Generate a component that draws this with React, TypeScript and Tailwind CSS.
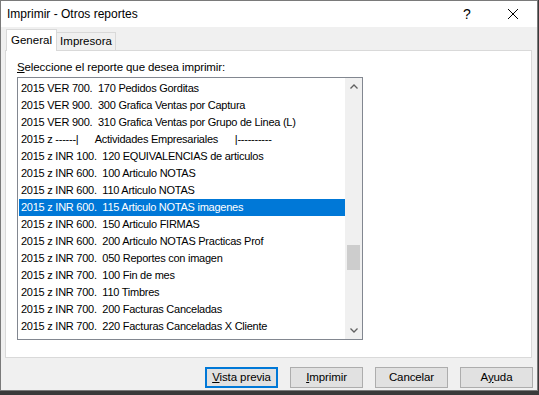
import React, { useState } from 'react';

const reports = [
  '2015 VER 700.  170 Pedidos Gorditas',
  '2015 VER 900.  300 Grafica Ventas por Captura',
  '2015 VER 900.  310 Grafica Ventas por Grupo de Linea (L)',
  '2015 z ------|      Actividades Empresariales      |----------',
  '2015 z INR 100.  120 EQUIVALENCIAS de articulos',
  '2015 z INR 600.  100 Articulo NOTAS',
  '2015 z INR 600.  110 Articulo NOTAS',
  '2015 z INR 600.  115 Articulo NOTAS imagenes',
  '2015 z INR 600.  150 Articulo FIRMAS',
  '2015 z INR 600.  200 Articulo NOTAS Practicas Prof',
  '2015 z INR 700.  050 Reportes con imagen',
  '2015 z INR 700.  100 Fin de mes',
  '2015 z INR 700.  110 Timbres',
  '2015 z INR 700.  200 Facturas Canceladas',
  '2015 z INR 700.  220 Facturas Canceladas X Cliente',
];

const font = { fontFamily: '"Liberation Sans", Arial, sans-serif' };

const Button: React.FC<{ children: React.ReactNode; focused?: boolean }> = ({ children, focused }) => (
  <button
    className={`w-[73px] h-[21px] text-[11.5px] tracking-[-0.1px] text-black bg-[#e1e1e1] border ${focused ? 'border-[#0078d7] shadow-[inset_0_0_0_1px_#0078d7]' : 'border-[#adadad]'} flex items-center justify-center`}
  >
    {children}
  </button>
);

export default function App() {
  const [selected, setSelected] = useState(7);
  return (
    <div className="w-[539px] h-[395px] bg-[#3a3a3a] overflow-hidden" style={font}>
      <div className="w-[538px] h-[391px] bg-[#f0f0f0] border border-[#7a7a7a] flex flex-col">
        {/* title bar */}
        <div className="h-[26px] bg-white flex items-center shrink-0">
          <span className="pl-[6px] text-[12px] text-black flex-1">Imprimir - Otros reportes</span>
          <span className="w-[46px] text-center text-[14px] text-black">?</span>
          <span className="w-[46px] flex justify-center mr-[1px]">
            <svg width="10" height="10" viewBox="0 0 10 10">
              <path d="M0 0L10 10M10 0L0 10" stroke="#000" strokeWidth="1" />
            </svg>
          </span>
        </div>

        {/* tabs */}
        <div className="flex items-end pl-[5px] h-[23px] shrink-0">
          <div className="h-[22px] w-[51px] bg-white border border-b-0 border-[#d9d9d9] text-[11.5px] flex items-center justify-center relative top-[1px] z-10">
            General
          </div>
          <div className="h-[18px] w-[59px] bg-[#f0f0f0] border border-l-0 border-b-0 border-[#d9d9d9] text-[11.5px] flex items-center justify-center">
            Impresora
          </div>
        </div>

        {/* panel */}
        <div className="mx-[4px] w-[527px] h-[308px] bg-white border border-[#d9d9d9] pt-[9px] px-[11px] shrink-0">
          <div className="text-[11.5px] tracking-[-0.1px] text-black leading-[15px] mb-[2px]">
            <span className="underline">S</span>eleccione el reporte que desea imprimir:
          </div>
          <div className="w-[346px] h-[263px] border border-[#828790] flex">
            <div className="flex-1 pt-[2px] pl-[1px] overflow-hidden">
              {reports.map((r, i) => (
                <div
                  key={i}
                  onClick={() => setSelected(i)}
                  className={`h-[17px] leading-[17px] pl-[2px] text-[11px] tracking-[-0.25px] whitespace-pre ${i === selected ? 'bg-[#0078d7] text-white' : 'text-black'}`}
                >
                  {r}
                </div>
              ))}
            </div>
            <div className="w-[17px] bg-[#f0f0f0] flex flex-col items-center">
              <div className="h-[17px] w-full flex items-center justify-center">
                <svg width="8" height="5" viewBox="0 0 8 5">
                  <path d="M0.5 4.5L4 1L7.5 4.5" stroke="#606060" strokeWidth="1.3" fill="none" />
                </svg>
              </div>
              <div className="h-[150px]" />
              <div className="w-[13px] h-[25px] bg-[#cdcdcd]" />
              <div className="flex-1" />
              <div className="h-[17px] w-full flex items-center justify-center">
                <svg width="8" height="5" viewBox="0 0 8 5">
                  <path d="M0.5 0.5L4 4L7.5 0.5" stroke="#606060" strokeWidth="1.3" fill="none" />
                </svg>
              </div>
            </div>
          </div>
        </div>

        {/* buttons */}
        <div className="flex justify-end gap-[12px] pr-[4px] pt-[9px]">
          <Button focused>
            <span><span className="underline">V</span>ista previa</span>
          </Button>
          <Button>
            <span><span className="underline">I</span>mprimir</span>
          </Button>
          <Button>Cancelar</Button>
          <Button>
            <span>A<span className="underline">y</span>uda</span>
          </Button>
        </div>
      </div>
    </div>
  );
}
